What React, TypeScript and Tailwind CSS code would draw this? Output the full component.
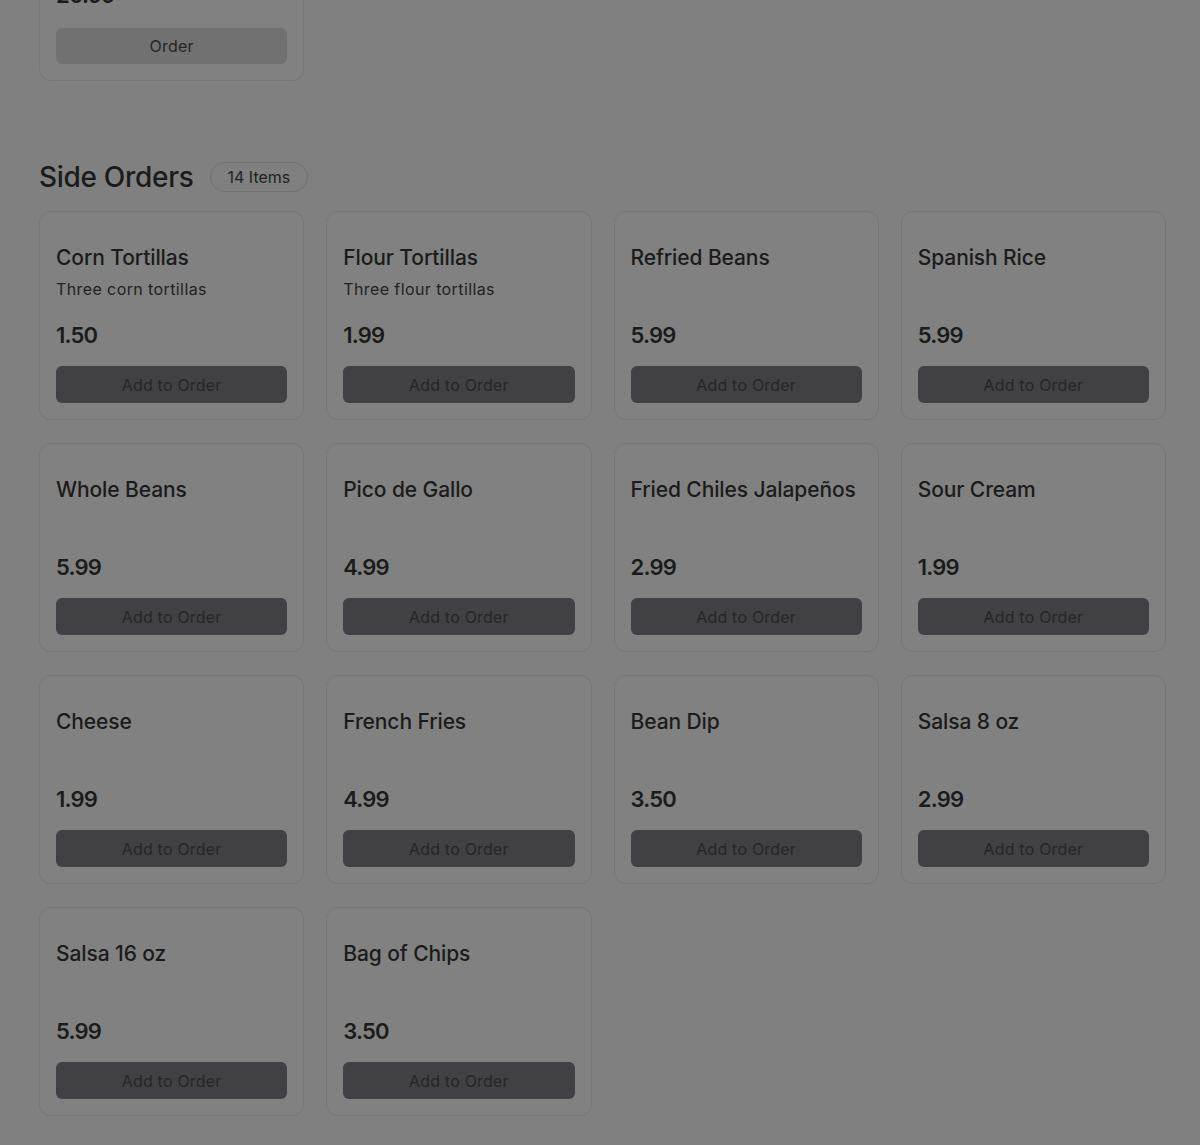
import React from "react";

const sides = [
  { name: "Corn Tortillas", desc: "Three corn tortillas", price: "1.50" },
  { name: "Flour Tortillas", desc: "Three flour tortillas", price: "1.99" },
  { name: "Refried Beans", desc: "", price: "5.99" },
  { name: "Spanish Rice", desc: "", price: "5.99" },
  { name: "Whole Beans", desc: "", price: "5.99" },
  { name: "Pico de Gallo", desc: "", price: "4.99" },
  { name: "Fried Chiles Jalapeños", desc: "", price: "2.99" },
  { name: "Sour Cream", desc: "", price: "1.99" },
  { name: "Cheese", desc: "", price: "1.99" },
  { name: "French Fries", desc: "", price: "4.99" },
  { name: "Bean Dip", desc: "", price: "3.50" },
  { name: "Salsa 8 oz", desc: "", price: "2.99" },
  { name: "Salsa 16 oz", desc: "", price: "5.99" },
  { name: "Bag of Chips", desc: "", price: "3.50" },
];

function SideCard({ name, desc, price }: { name: string; desc: string; price: string }) {
  return (
    <div className="rounded-xl border border-[#777777] bg-[#818181] px-4 pt-[32px] pb-4">
      <h3 className="text-[21px] leading-7 font-medium text-[#1b1b1b] whitespace-nowrap tracking-[-0.1px]">
        {name}
      </h3>
      <p className="mt-[5px] h-6 text-[16px] leading-6 tracking-[0.4px] text-[#222222]">{desc}</p>
      <p className="mt-[18px] text-[22px] leading-8 font-semibold text-[#1b1b1b] tracking-[-0.8px]">
        {price}
      </p>
      <button className="mt-[15px] w-full h-[37px] rounded-md bg-[#414045] text-[16px] tracking-[0.2px] text-[#262626]">
        Add to Order
      </button>
    </div>
  );
}

export default function App() {
  return (
    <div
      className="min-h-[1145px] bg-[#808080] overflow-hidden"
      style={{ fontFamily: "Inter, 'Open Sans', sans-serif" }}
    >
      <div className="pl-[39px] pr-[34px]">
        {/* previous section, scrolled past */}
        <div className="grid grid-cols-4 gap-[22px] -mt-[21px]">
          <div className="rounded-b-xl border border-t-0 border-[#777777] bg-[#818181] px-4 pb-4">
            <p className="text-[22px] leading-8 font-semibold text-[#1b1b1b] tracking-[-0.8px]">20.99</p>
            <button className="mt-[17px] w-full h-[36px] rounded-md bg-[#717171] text-[16px] tracking-[0.2px] text-[#262626]">
              Order
            </button>
          </div>
        </div>

        {/* Side Orders */}
        <div className="mt-[78px] flex items-center gap-4">
          <h2 className="text-[28px] leading-9 font-medium text-[#1b1b1b] tracking-[-0.3px]">Side Orders</h2>
          <span className="rounded-full border border-[#727272] px-[17px] h-[30px] flex items-center text-[16px] text-[#222222]">
            14 Items
          </span>
        </div>

        <div className="mt-[16px] grid grid-cols-4 gap-x-[22px] gap-y-[23px] pb-8">
          {sides.map((s) => (
            <SideCard key={s.name} {...s} />
          ))}
        </div>
      </div>
    </div>
  );
}
